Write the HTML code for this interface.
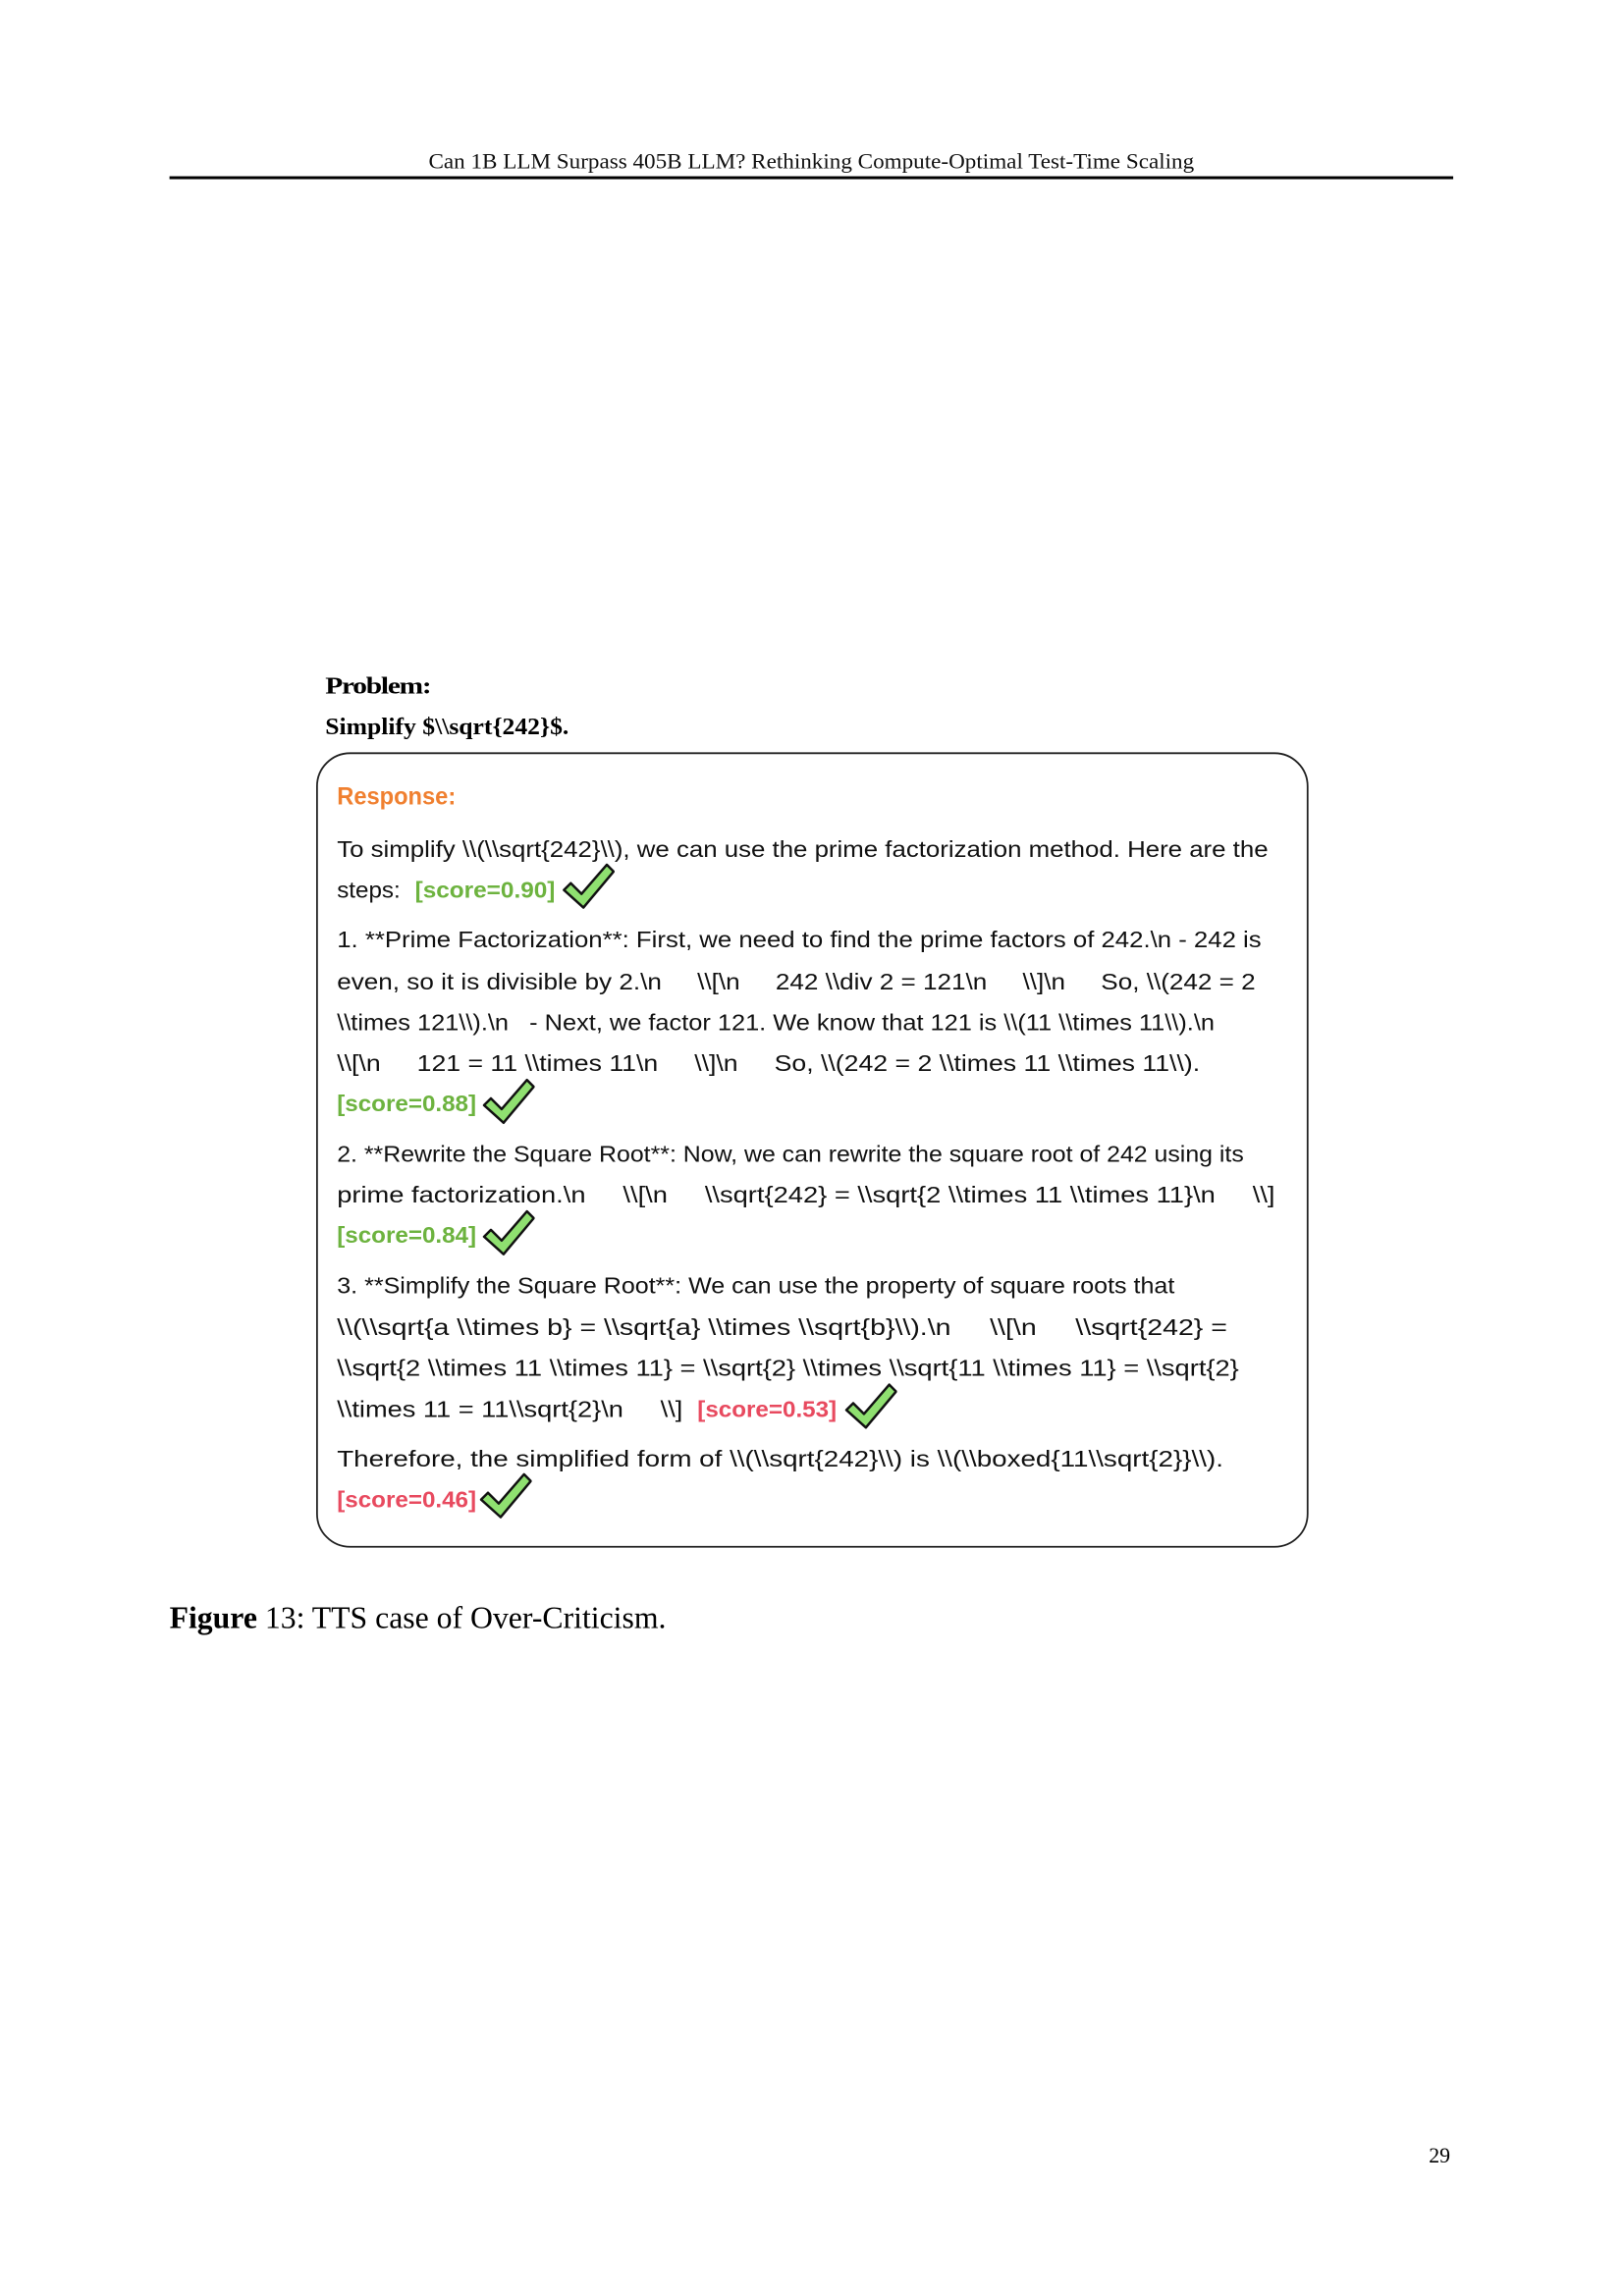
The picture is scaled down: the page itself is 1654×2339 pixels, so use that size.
<!DOCTYPE html>
<html><head><meta charset="utf-8"><style>html,body{margin:0;padding:0;background:#fff}svg{display:block}</style></head>
<body>
<svg width="1654" height="2339" viewBox="0 0 1654 2339" xmlns="http://www.w3.org/2000/svg">
<defs>
<symbol id="ck" viewBox="0 0 54 50"><polygon points="2,28 9,21 20,32 46,2 53,9 22,46" fill="#8fe070" stroke="#111" stroke-width="2.5" stroke-linejoin="round"/></symbol>
</defs>
<rect width="1654" height="2339" fill="#fff"/>
<g transform="scale(0.992)">
<text x="440" y="173" font-family="Liberation Serif, serif" font-size="22" textLength="786" lengthAdjust="spacingAndGlyphs" fill="#111">Can 1B LLM Surpass 405B LLM? Rethinking Compute-Optimal Test-Time Scaling</text>
<rect x="174" y="181" width="1318" height="3" fill="#000"/>
<g font-family="Liberation Serif, serif" font-weight="bold" font-size="24" fill="#000">
<text x="334" y="712" textLength="108" lengthAdjust="spacingAndGlyphs" letter-spacing="-1">Problem:</text>
<text x="334" y="754" textLength="250" lengthAdjust="spacingAndGlyphs">Simplify $\\sqrt{242}$.</text>
</g>
<rect x="325.5" y="773.5" width="1017" height="815" rx="34" fill="none" stroke="#222" stroke-width="1.8"/>
<g font-family="Liberation Sans, sans-serif" font-size="23" fill="#111">
<text x="346" y="826" fill="#f08030" font-size="25" font-weight="bold" textLength="122" lengthAdjust="spacingAndGlyphs">Response:</text>
<text x="346" y="880" textLength="956" lengthAdjust="spacingAndGlyphs">To simplify \\(\\sqrt{242}\\), we can use the prime factorization method. Here are the</text>
<text x="346" y="922" textLength="65" lengthAdjust="spacingAndGlyphs">steps:</text>
<text x="426" y="922" fill="#6db33f" font-weight="bold" textLength="144" lengthAdjust="spacingAndGlyphs">[score=0.90]</text>
<text x="346" y="973" textLength="949" lengthAdjust="spacingAndGlyphs">1. **Prime Factorization**: First, we need to find the prime factors of 242.\n   - 242 is</text>
<text x="346" y="1016" textLength="943" lengthAdjust="spacingAndGlyphs" xml:space="preserve">even, so it is divisible by 2.\n     \\[\n     242 \\div 2 = 121\n     \\]\n     So, \\(242 = 2</text>
<text x="346" y="1058" textLength="901" lengthAdjust="spacingAndGlyphs" xml:space="preserve">\\times 121\\).\n   - Next, we factor 121. We know that 121 is \\(11 \\times 11\\).\n</text>
<text x="346" y="1100" textLength="886" lengthAdjust="spacingAndGlyphs" xml:space="preserve">\\[\n     121 = 11 \\times 11\n     \\]\n     So, \\(242 = 2 \\times 11 \\times 11\\).</text>
<text x="346" y="1141" fill="#6db33f" font-weight="bold" textLength="143" lengthAdjust="spacingAndGlyphs">[score=0.88]</text>
<text x="346" y="1193" textLength="931" lengthAdjust="spacingAndGlyphs">2. **Rewrite the Square Root**: Now, we can rewrite the square root of 242 using its</text>
<text x="346" y="1235" textLength="963" lengthAdjust="spacingAndGlyphs" xml:space="preserve">prime factorization.\n     \\[\n     \\sqrt{242} = \\sqrt{2 \\times 11 \\times 11}\n     \\]</text>
<text x="346" y="1276" fill="#6db33f" font-weight="bold" textLength="143" lengthAdjust="spacingAndGlyphs">[score=0.84]</text>
<text x="346" y="1328" textLength="860" lengthAdjust="spacingAndGlyphs">3. **Simplify the Square Root**: We can use the property of square roots that</text>
<text x="346" y="1371" textLength="914" lengthAdjust="spacingAndGlyphs" xml:space="preserve">\\(\\sqrt{a \\times b} = \\sqrt{a} \\times \\sqrt{b}\\).\n     \\[\n     \\sqrt{242} =</text>
<text x="346" y="1413" textLength="926" lengthAdjust="spacingAndGlyphs">\\sqrt{2 \\times 11 \\times 11} = \\sqrt{2} \\times \\sqrt{11 \\times 11} = \\sqrt{2}</text>
<text x="346" y="1455" textLength="355" lengthAdjust="spacingAndGlyphs" xml:space="preserve">\\times 11 = 11\\sqrt{2}\n     \\]</text>
<text x="716" y="1455" fill="#e84a5f" font-weight="bold" textLength="143" lengthAdjust="spacingAndGlyphs">[score=0.53]</text>
<text x="346" y="1506" textLength="910" lengthAdjust="spacingAndGlyphs">Therefore, the simplified form of \\(\\sqrt{242}\\) is \\(\\boxed{11\\sqrt{2}}\\).</text>
<text x="346" y="1548" fill="#e84a5f" font-weight="bold" textLength="143" lengthAdjust="spacingAndGlyphs">[score=0.46]</text>
</g>
<use href="#ck" x="577" y="886" width="54" height="50"/>
<use href="#ck" x="495" y="1107" width="54" height="50"/>
<use href="#ck" x="495" y="1242" width="54" height="50"/>
<use href="#ck" x="867" y="1420" width="54" height="50"/>
<use href="#ck" x="492" y="1512" width="54" height="50"/>
<text x="174" y="1672" font-family="Liberation Serif, serif" font-size="32" fill="#000"><tspan font-weight="bold">Figure</tspan> 13: TTS case of Over-Criticism.</text>
<text x="1467" y="2221" font-family="Liberation Serif, serif" font-size="22" fill="#000">29</text>
</g>
</svg>
</body></html>
